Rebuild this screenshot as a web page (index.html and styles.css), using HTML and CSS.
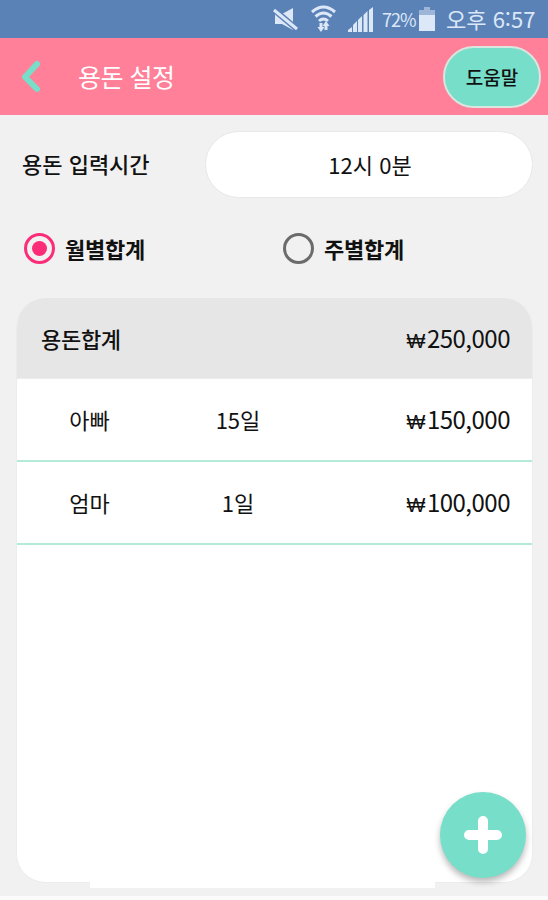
FILE: index.html
```html
<!doctype html>
<html lang="ko">
  <head>
    <meta charset="UTF-8" />
    <meta name="viewport" content="width=device-width, initial-scale=1" />
    <title>용돈 설정</title>
    <link rel="stylesheet" href="styles.css" />
  </head>
  <body>
    <div class="screen">
      <div class="status-bar">
        <svg class="status-icons" width="164" height="38" viewBox="0 0 164 38">
          <!-- muted speaker -->
          <path class="fill" d="M3 14h7l11-6v22l-11-6H3z" />
          <path class="gap" d="M0 8l26 22" />
          <path class="slash" d="M2 10l23 19" />
          <!-- wifi -->
          <path class="wave" d="M40 12q11.500-10 23 0M43.500 16.500q8-7 16 0M47 21q4.500-4 9 0" />
          <path class="arrows" d="M49 29v-6M54 24v6" />
          <path class="fill" d="M45.500 27h7L49 32zM50.500 26h7L54 21z" />
          <!-- signal -->
          <path class="fill" d="M76 32v-2l4-3v5zM81 32v-7l4-4v11zM86 32V20l4-4v16zM91.500 32V15l4-4v21zM97 32V10l4-3v25z" />
          <text x="110" y="27">72%</text>
          <!-- battery -->
          <path class="fade" d="M152 7h6v3h5v6h-16v-6h5z" />
          <path class="fill" d="M147 15h16v16h-16z" />
        </svg>
        <span class="clock">오후 6:57</span>
      </div>

      <header class="header">
        <svg class="back" width="22" height="34" viewBox="0 0 22 34">
          <path d="M17 4L5 17l12 12" />
        </svg>
        <h1>용돈 설정</h1>
        <button class="help-button">도움말</button>
      </header>

      <div class="time-row">
        <span class="time-label">용돈 입력시간</span>
        <button class="time-button">12시 0분</button>
      </div>

      <div class="radio-row">
        <label class="radio-label">
          <span class="radio checked"></span>
          월별합계
        </label>
        <label class="radio-label">
          <span class="radio"></span>
          주별합계
        </label>
      </div>

      <div class="card">
        <div class="row total">
          <span class="total-name">용돈합계</span>
          <span class="amount"><span class="won">₩</span>250,000</span>
        </div>
        <div class="row">
          <span class="name">아빠</span>
          <span class="day">15일</span>
          <span class="amount"><span class="won">₩</span>150,000</span>
        </div>
        <div class="row">
          <span class="name">엄마</span>
          <span class="day">1일</span>
          <span class="amount"><span class="won">₩</span>100,000</span>
        </div>
      </div>
      <div class="card-foot"></div>

      <button class="add-button">
        <svg width="38" height="38" viewBox="0 0 38 38">
          <path d="M19 5v28M5 19h28" />
        </svg>
      </button>
    </div>
  </body>
</html>
```

FILE: styles.css
```css
:root {
  --blue: #5b82b6;
  --pink: #ff8098;
  --mint: #76dec9;
  --bg: #f1f1f1;
  --radio: #fb2c78;
  --status: #dce8f8;
}

* {
  margin: 0;
  padding: 0;
  box-sizing: border-box;
}

body {
  font-family: 'Noto Sans CJK KR', sans-serif;
  font-size: 23px;
  line-height: 1;
  color: #111;
  background-color: #fbfbfb;
}

button {
  font-family: inherit;
  color: inherit;
  border: none;
}

.screen {
  position: relative;
  height: 896px;
  background-color: var(--bg);
}

.status-bar {
  display: flex;
  align-items: center;
  justify-content: flex-end;
  height: 38px;
  padding-right: 13px;
  background-color: var(--blue);
  color: var(--status);
}

.status-icons {
  margin-right: 10px;
}

.status-icons .fill,
.status-icons text {
  fill: var(--status);
}

.status-icons text {
  font-size: 18px;
  letter-spacing: -1px;
}

.status-icons .fade {
  fill: #9db5d6;
}

.status-icons .gap,
.status-icons .slash,
.status-icons .wave,
.status-icons .arrows {
  fill: none;
  stroke: var(--status);
  stroke-width: 3;
}

.status-icons .gap {
  stroke: var(--blue);
  stroke-width: 6;
}

.clock {
  width: 89px;
  padding-bottom: 2px;
  font-size: 22px;
  white-space: nowrap;
}

.header {
  display: flex;
  align-items: center;
  height: 77px;
  padding: 0 7px 0 20px;
  background-color: var(--pink);
}

.back {
  margin-right: 36px;
}

.back path {
  fill: none;
  stroke: var(--mint);
  stroke-width: 6;
  stroke-linecap: round;
  stroke-linejoin: round;
}

h1 {
  font-size: 25px;
  font-weight: 400;
  letter-spacing: -0.5px;
  color: white;
}

.help-button {
  width: 98px;
  height: 62px;
  margin-left: auto;
  border: 2px solid #d9e5df;
  border-radius: 31px;
  background-color: var(--mint);
  font-size: 19px;
  font-weight: 500;
}

.time-row {
  display: flex;
  align-items: center;
  justify-content: space-between;
  padding: 16px 15px 0 22px;
}

.time-label {
  padding-bottom: 3px;
  font-size: 22px;
  font-weight: 500;
}

.time-button {
  width: 328px;
  height: 67px;
  padding: 0 0 2px 2px;
  border: 1px solid #e8e8e8;
  border-radius: 34px;
  background-color: white;
  font-size: 22px;
}

.radio-row {
  display: grid;
  grid-template-columns: 259px 1fr;
  height: 100px;
  padding-left: 24px;
}

.radio-label {
  display: flex;
  align-items: center;
  gap: 10px;
  font-size: 22px;
  font-weight: 700;
  letter-spacing: -0.2px;
}

.radio {
  display: grid;
  place-items: center;
  width: 31px;
  height: 31px;
  border: 3px solid #6b6b6b;
  border-radius: 50%;
}

.radio.checked {
  border-color: var(--radio);
}

.radio.checked::after {
  content: '';
  width: 15px;
  height: 15px;
  border-radius: 50%;
  background-color: var(--radio);
}

.card {
  width: 517px;
  height: 585px;
  margin-left: 16px;
  border: solid #ececec;
  border-width: 0 1px 1px;
  border-radius: 29px;
  background-color: white;
  overflow: hidden;
}

.row {
  display: grid;
  grid-template-columns: 145px 152px 1fr;
  align-items: center;
  height: 83px;
  padding-right: 22px;
  border-bottom: 2px solid #b4eada;
  text-align: center;
}

.row.total {
  grid-template-columns: 1fr 1fr;
  height: 81px;
  padding-left: 24px;
  border-bottom: 1px solid #ececec;
  background-color: #e6e6e6;
  text-align: left;
}

.total-name {
  font-size: 22px;
  font-weight: 500;
  letter-spacing: -0.3px;
}

.name,
.day {
  padding-bottom: 2px;
  font-size: 22px;
}

.amount {
  font-size: 24px;
  letter-spacing: -0.5px;
  text-align: right;
}

.won {
  margin-right: 2px;
  font-family: 'Liberation Sans', sans-serif;
  font-size: 20px;
}

/* white strip running past the bottom edge of the card */
.card-foot {
  width: 345px;
  height: 6px;
  margin: -1px 0 0 90px;
  position: relative;
  background-color: white;
}

.add-button {
  position: absolute;
  right: 22px;
  bottom: 18px;
  display: grid;
  place-items: center;
  width: 86px;
  height: 86px;
  border-radius: 50%;
  background-color: var(--mint);
  box-shadow: 0 4px 6px rgba(0, 0, 0, 0.28);
}

.add-button path {
  stroke: white;
  stroke-width: 10;
  stroke-linecap: round;
}
```
